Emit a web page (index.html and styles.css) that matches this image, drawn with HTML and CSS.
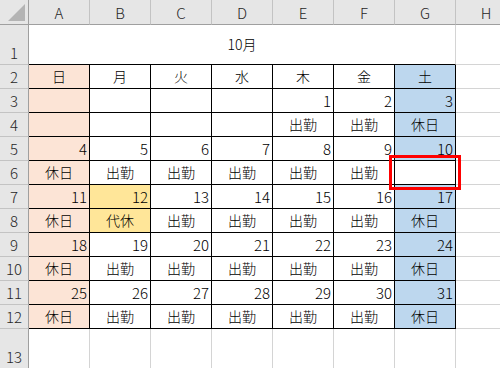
FILE: index.html
```html
<!DOCTYPE html>
<html lang="ja">
<head>
<meta charset="utf-8">
<title>10月</title>
<link rel="stylesheet" href="styles.css">
</head>
<body>
<div class="sheet">
  <div class="grid">
    <!-- header row -->
    <div class="corner"><svg class="tri" width="18" height="18" viewBox="0 0 18 18"><polygon points="17,0 17,17 0,17" fill="#b4b4b4"/></svg></div>
    <div class="ch">A</div><div class="ch">B</div><div class="ch">C</div><div class="ch">D</div><div class="ch">E</div><div class="ch">F</div><div class="ch">G</div><div class="ch">H</div>

    <!-- row 1 -->
    <div class="rh">1</div>
    <div class="c title">10月</div>
    <div class="c"></div>

    <!-- row 2 -->
    <div class="rh">2</div>
    <div class="c k t sun">日</div><div class="c k t">月</div><div class="c k t">火</div><div class="c k t">水</div><div class="c k t">木</div><div class="c k t">金</div><div class="c k t sat">土</div><div class="c"></div>

    <!-- row 3 -->
    <div class="rh">3</div>
    <div class="c k n sun"></div><div class="c k n"></div><div class="c k n"></div><div class="c k n"></div><div class="c k n">1</div><div class="c k n">2</div><div class="c k n sat">3</div><div class="c"></div>

    <!-- row 4 -->
    <div class="rh">4</div>
    <div class="c k t sun"></div><div class="c k t"></div><div class="c k t"></div><div class="c k t"></div><div class="c k t">出勤</div><div class="c k t">出勤</div><div class="c k t sat">休日</div><div class="c"></div>

    <!-- row 5 -->
    <div class="rh">5</div>
    <div class="c k n sun">4</div><div class="c k n">5</div><div class="c k n">6</div><div class="c k n">7</div><div class="c k n">8</div><div class="c k n">9</div><div class="c k n sat">10</div><div class="c"></div>

    <!-- row 6 -->
    <div class="rh">6</div>
    <div class="c k t sun">休日</div><div class="c k t">出勤</div><div class="c k t">出勤</div><div class="c k t">出勤</div><div class="c k t">出勤</div><div class="c k t">出勤</div><div class="c k t"></div><div class="c"></div>

    <!-- row 7 -->
    <div class="rh">7</div>
    <div class="c k n sun">11</div><div class="c k n hol">12</div><div class="c k n">13</div><div class="c k n">14</div><div class="c k n">15</div><div class="c k n">16</div><div class="c k n sat">17</div><div class="c"></div>

    <!-- row 8 -->
    <div class="rh">8</div>
    <div class="c k t sun">休日</div><div class="c k t hol">代休</div><div class="c k t">出勤</div><div class="c k t">出勤</div><div class="c k t">出勤</div><div class="c k t">出勤</div><div class="c k t sat">休日</div><div class="c"></div>

    <!-- row 9 -->
    <div class="rh">9</div>
    <div class="c k n sun">18</div><div class="c k n">19</div><div class="c k n">20</div><div class="c k n">21</div><div class="c k n">22</div><div class="c k n">23</div><div class="c k n sat">24</div><div class="c"></div>

    <!-- row 10 -->
    <div class="rh">10</div>
    <div class="c k t sun">休日</div><div class="c k t">出勤</div><div class="c k t">出勤</div><div class="c k t">出勤</div><div class="c k t">出勤</div><div class="c k t">出勤</div><div class="c k t sat">休日</div><div class="c"></div>

    <!-- row 11 -->
    <div class="rh">11</div>
    <div class="c k n sun">25</div><div class="c k n">26</div><div class="c k n">27</div><div class="c k n">28</div><div class="c k n">29</div><div class="c k n">30</div><div class="c k n sat">31</div><div class="c"></div>

    <!-- row 12 -->
    <div class="rh">12</div>
    <div class="c k t sun">休日</div><div class="c k t">出勤</div><div class="c k t">出勤</div><div class="c k t">出勤</div><div class="c k t">出勤</div><div class="c k t">出勤</div><div class="c k t sat">休日</div><div class="c"></div>

    <!-- row 13 -->
    <div class="rh">13</div>
    <div class="c"></div><div class="c"></div><div class="c"></div><div class="c"></div><div class="c"></div><div class="c"></div><div class="c"></div><div class="c"></div>
  </div>
  <div class="select"></div>
</div>
</body>
</html>
```

FILE: styles.css
```css
html, body {
  margin: 0;
  padding: 0;
  background: #ffffff;
  overflow: hidden;
}

.sheet {
  position: relative;
  width: 500px;
  height: 368px;
  overflow: hidden;
  font-family: "Noto Sans CJK JP", "Noto Sans", sans-serif;
  font-weight: 300;
  color: #000;
}

.grid {
  display: grid;
  grid-template-columns: 29px repeat(8, 61px);
  grid-template-rows: 25px 40px repeat(11, 24px) 40px;
  width: 517px;
}

.grid > div {
  box-sizing: border-box;
}

.corner {
  background: #e6e6e6;
  border-right: 1px solid #9f9f9f;
  border-bottom: 1px solid #9f9f9f;
  position: relative;
}

.tri {
  position: absolute;
  left: 8px;
  top: 4px;
}

.ch {
  background: #e6e6e6;
  border-right: 1px solid #c3c3c3;
  border-bottom: 1px solid #9f9f9f;
  display: flex;
  align-items: center;
  justify-content: center;
  font-size: 15px;
  color: #262626;
  line-height: 1;
  padding-top: 1px;
}

.rh {
  background: #e6e6e6;
  border-right: 1px solid #9f9f9f;
  border-bottom: 1px solid #c3c3c3;
  display: flex;
  align-items: flex-end;
  justify-content: center;
  font-size: 15px;
  color: #262626;
  line-height: 22px;
}

.c {
  border-right: 1px solid #d4d4d4;
  border-bottom: 1px solid #d4d4d4;
  font-size: 14px;
  line-height: 23px;
  display: flex;
  align-items: center;
}

.title {
  grid-column: span 7;
  justify-content: center;
  border-bottom: 1px solid #000;
}

.k {
  border-right: 1px solid #000;
  border-bottom: 1px solid #000;
}

.t {
  justify-content: center;
}

.n {
  justify-content: flex-end;
  padding-right: 2px;
  font-size: 15px;
}

.sun {
  background: #fce4d6;
}

.sat {
  background: #bdd7ee;
}

.hol {
  background: #ffe699;
}

.select {
  position: absolute;
  left: 389px;
  top: 155px;
  width: 72px;
  height: 35px;
  box-sizing: border-box;
  border: 3px solid #ff0000;
}
```
